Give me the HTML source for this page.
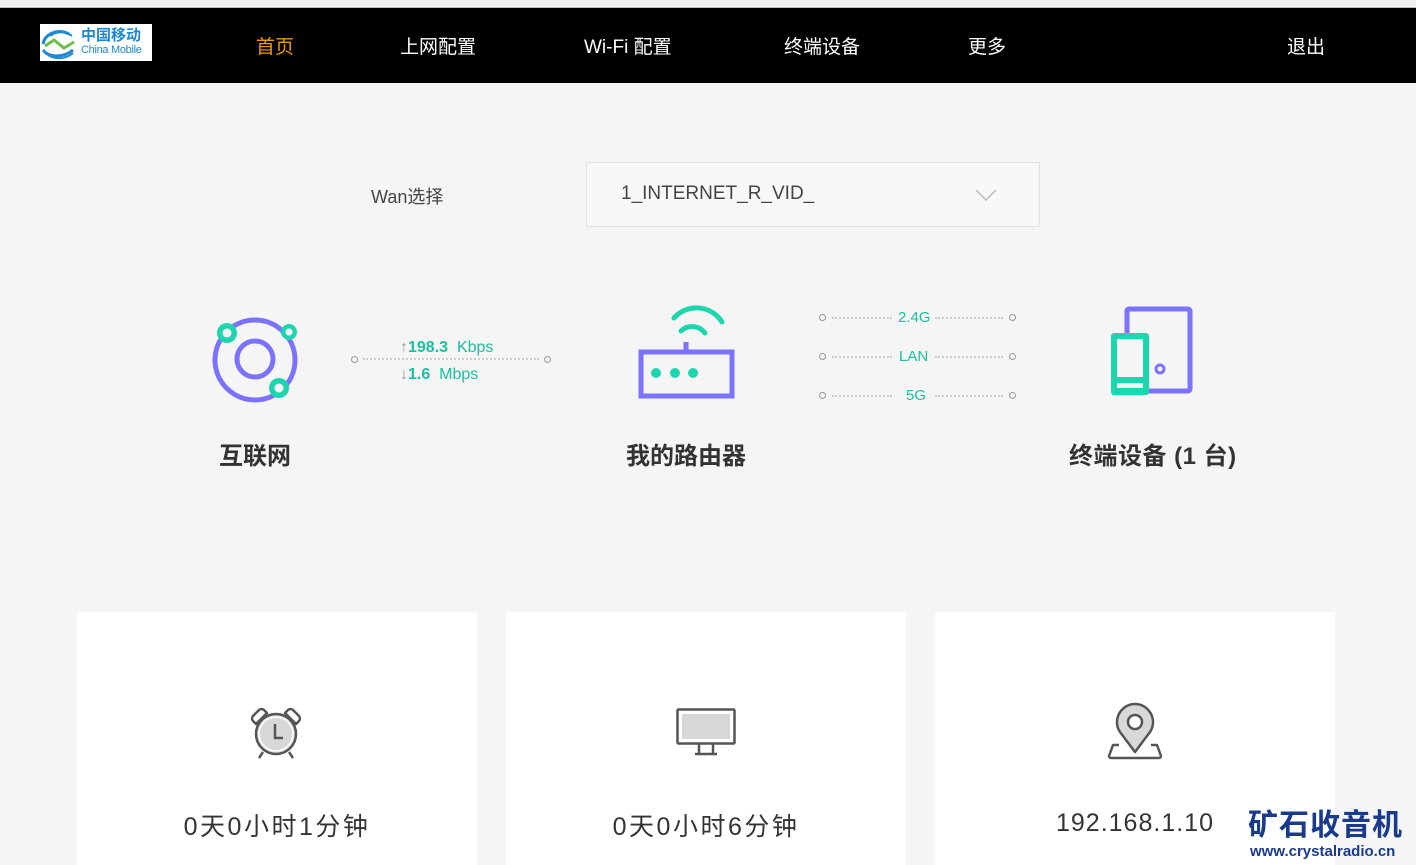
<!DOCTYPE html>
<html><head><meta charset="utf-8"><style>
*{margin:0;padding:0;box-sizing:border-box}
body{width:1416px;height:865px;background:#f5f5f5;position:relative;overflow:hidden;font-family:"Liberation Sans","Noto Sans CJK SC",sans-serif;color:#333}
.a{position:absolute;white-space:nowrap}
.nav{position:absolute;left:0;top:7px;width:1416px;height:76px;background:#000;border-top:1px solid #bbb}
.nav span{position:absolute;top:24px;font-size:19px;color:#fff}
.g{color:#19c2a0}
.dots{position:absolute;height:0;border-top:2px dotted #ccc}
.ring{position:absolute;width:7px;height:7px;border:1.5px solid #999;border-radius:50%}
.card{position:absolute;top:612px;width:400px;height:253px;background:#fff}
.card .t{position:absolute;top:195px;width:100%;text-align:center;font-size:25px;color:#333;letter-spacing:2.5px}
.title{font-size:24px;font-weight:bold;color:#333}
</style></head><body>
<div class="a" style="left:0;top:0;width:1416px;height:7px;background:#f0f0f0"></div>
<div class="nav">
 <div class="a" style="left:40px;top:16px;width:112px;height:37px;background:#fff">
  <svg width="40" height="37" viewBox="0 0 40 37" style="position:absolute;left:0;top:0">
   <path d="M3 20c2-10 14-16 26-10" stroke="#1e88d0" stroke-width="3" fill="none"/>
   <path d="M3 26c6 8 20 8 30 0" stroke="#1e88d0" stroke-width="3" fill="none"/>
   <path d="M8 31c8 5 18 4 25-2" stroke="#1e88d0" stroke-width="2" fill="none"/>
   <path d="M5 22l9-6 10 8 10-6" stroke="#6cc04a" stroke-width="3" fill="none"/>
   <path d="M10 12c6-5 16-5 22 0" stroke="#1e88d0" stroke-width="2" fill="none"/>
  </svg>
  <span style="position:absolute;left:41px;top:0;font-size:15px;color:#1e88d0;font-weight:bold">中国移动</span>
  <span style="position:absolute;left:41px;top:20px;font-size:11px;color:#1e88d0;letter-spacing:-0.3px">China Mobile</span>
 </div>
 <span style="left:256px;color:#f39800">首页</span>
 <span style="left:400px">上网配置</span>
 <span style="left:584px">Wi-Fi 配置</span>
 <span style="left:784px">终端设备</span>
 <span style="left:968px">更多</span>
 <span style="left:1287px">退出</span>
</div>

<div class="a" style="left:371px;top:183px;font-size:18px;color:#444">Wan选择</div>
<div class="a" style="left:586px;top:162px;width:454px;height:65px;background:#f8f8f8;border:1px solid #e3e3e3">
 <span class="a" style="left:34px;top:20px;font-size:19px;color:#444">1_INTERNET_R_VID_</span>
 <svg class="a" style="left:388px;top:26px" width="22" height="12"><path d="M1 1l10 10 10-10" stroke="#bbb" stroke-width="1.5" fill="none"/></svg>
</div>

<svg class="a" style="left:210px;top:316px" width="92" height="90" viewBox="0 0 92 90">
 <circle cx="45" cy="44" r="40" stroke="#7b72ff" stroke-width="5" fill="none"/>
 <circle cx="45" cy="43" r="18" stroke="#7b72ff" stroke-width="5" fill="none"/>
 <circle cx="17" cy="17" r="10" fill="#1ed6ad"/><circle cx="17" cy="17" r="4.5" fill="#f5f5f5"/>
 <circle cx="79" cy="16" r="8" fill="#1ed6ad"/><circle cx="79" cy="16" r="3.5" fill="#f5f5f5"/>
 <circle cx="69" cy="72" r="10" fill="#1ed6ad"/><circle cx="69" cy="72" r="4.5" fill="#f5f5f5"/>
</svg>
<div class="ring" style="left:351px;top:356px"></div>
<div class="dots" style="left:363px;top:358px;width:176px"></div>
<div class="ring" style="left:544px;top:356px"></div>
<div class="a" style="left:400px;top:339px;font-size:16px"><span style="color:#999">↑</span><b class="g">198.3</b>&nbsp; <span class="g">Kbps</span></div>
<div class="a" style="left:400px;top:366px;font-size:16px"><span style="color:#999">↓</span><b class="g">1.6</b>&nbsp; <span class="g">Mbps</span></div>

<svg class="a" style="left:636px;top:304px" width="102" height="96" viewBox="0 0 102 96">
 <path d="M44 14a30 30 0 0 1 48 4" transform="translate(-6,0)" stroke="#1ed6ad" stroke-width="5" fill="none" stroke-linecap="round"/>
 <path d="M51 27a16 16 0 0 1 24 2" transform="translate(-6,0)" stroke="#1ed6ad" stroke-width="5" fill="none" stroke-linecap="round"/>
 <line x1="50" y1="38" x2="50" y2="50" stroke="#7b72ff" stroke-width="5"/>
 <rect x="5" y="48" width="91" height="44" stroke="#7b72ff" stroke-width="5" fill="none"/>
 <circle cx="20" cy="69" r="5" fill="#1ed6ad"/><circle cx="39" cy="69" r="5" fill="#1ed6ad"/><circle cx="57" cy="69" r="5" fill="#1ed6ad"/>
</svg>

<div class="ring" style="left:819px;top:314px"></div><div class="dots" style="left:832px;top:317px;width:60px"></div><div class="a g" style="left:898px;top:309px;font-size:15px">2.4G</div><div class="dots" style="left:935px;top:317px;width:68px"></div><div class="ring" style="left:1009px;top:314px"></div>
<div class="ring" style="left:819px;top:353px"></div><div class="dots" style="left:832px;top:356px;width:60px"></div><div class="a g" style="left:899px;top:348px;font-size:15px">LAN</div><div class="dots" style="left:935px;top:356px;width:68px"></div><div class="ring" style="left:1009px;top:353px"></div>
<div class="ring" style="left:819px;top:392px"></div><div class="dots" style="left:832px;top:395px;width:60px"></div><div class="a g" style="left:906px;top:387px;font-size:15px">5G</div><div class="dots" style="left:935px;top:395px;width:68px"></div><div class="ring" style="left:1009px;top:392px"></div>

<svg class="a" style="left:1108px;top:305px" width="88" height="92" viewBox="0 0 88 92">
 <rect x="19" y="4" width="63" height="82" rx="2" stroke="#7b72ff" stroke-width="5" fill="none"/>
 <circle cx="52" cy="64" r="4" stroke="#7b72ff" stroke-width="3" fill="none"/>
 <rect x="3" y="28" width="38" height="62" rx="3" fill="#1ed6ad"/>
 <rect x="9" y="34" width="26" height="38" fill="#f5f5f5"/>
 <rect x="9" y="78" width="26" height="5" fill="#f5f5f5"/>
</svg>

<div class="a title" style="left:219px;top:436px">互联网</div>
<div class="a title" style="left:626px;top:436px">我的路由器</div>
<div class="a title" style="left:1069px;top:436px;letter-spacing:0.5px">终端设备 (1 台)</div>

<div class="card" style="left:77px">
 <svg class="a" style="left:171px;top:92px" width="58" height="56" viewBox="0 0 58 56">
  <path d="M8 20l-3-3a4 4 0 0 1 0-5l6-6a4 4 0 0 1 5 0l3 3zM48 20l3-3a4 4 0 0 0 0-5l-6-6a4 4 0 0 0-5 0l-3 3z" fill="#fff" stroke="#555" stroke-width="2.5" stroke-linejoin="round"/>
  <circle cx="28" cy="30" r="20" fill="#d8d8d8" stroke="#555" stroke-width="2.5"/>
  <circle cx="28" cy="30" r="17" fill="#d8d8d8" stroke="#fff" stroke-width="1.5"/>
  <path d="M27 20v14h8" stroke="#555" stroke-width="2.5" fill="none"/>
  <path d="M15 48l-4 6M41 48l4 6" stroke="#555" stroke-width="2.5" fill="none"/>
 </svg>
 <div class="t">0天0小时1分钟</div>
</div>
<div class="card" style="left:506px">
 <svg class="a" style="left:170px;top:96px" width="60" height="48" viewBox="0 0 60 48">
  <rect x="1.5" y="1.5" width="57" height="34" rx="1" fill="#fff" stroke="#555" stroke-width="2.5"/>
  <rect x="6" y="6" width="48" height="25" fill="#d8d8d8"/>
  <path d="M23 36v9M37 36v9M19 46h22" stroke="#555" stroke-width="2.5"/>
 </svg>
 <div class="t">0天0小时6分钟</div>
</div>
<div class="card" style="left:935px">
 <svg class="a" style="left:172px;top:90px" width="56" height="58" viewBox="0 0 56 58">
  <path d="M12 43h-6l-4 11a2 2 0 0 0 2 2h48a2 2 0 0 0 2-2l-4-11h-6" stroke="#555" stroke-width="2.5" fill="none" stroke-linejoin="round"/>
  <path d="M28 50L13 30a18 18 0 1 1 30 0z" fill="#d8d8d8" stroke="#555" stroke-width="2.5" stroke-linejoin="round"/>
  <circle cx="28" cy="20" r="7" fill="#fff" stroke="#555" stroke-width="2.5"/>
 </svg>
 <div class="t" style="top:197px;letter-spacing:1px">192.168.1.10</div>
</div>

<div class="a" style="left:1248px;top:800px;font-size:30px;font-weight:bold;color:#1a3a8c;letter-spacing:1px">矿石收音机</div>
<div class="a" style="left:1250px;top:843px;font-size:15px;font-weight:bold;color:#1a3a8c">www.crystalradio.cn</div>
</body></html>
